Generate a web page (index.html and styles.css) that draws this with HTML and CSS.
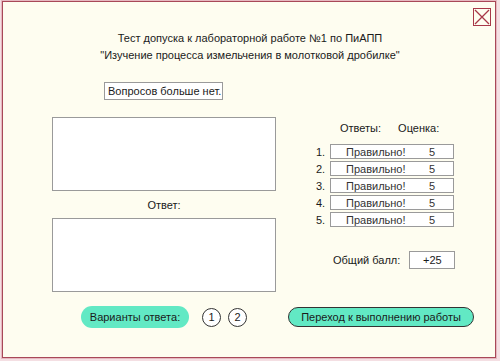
FILE: index.html
```html
<!DOCTYPE html>
<html lang="ru">
  <head>
    <meta charset="UTF-8" />
    <meta name="viewport" content="width=device-width, initial-scale=1.0" />
    <title>Тест допуска</title>
    <link rel="stylesheet" href="styles.css">
  </head>

  <body>
    <div class="frame">
      <div class="top">
        <div class="close">
          <svg width="18" height="18" viewBox="0 0 18 18">
            <rect x="0.5" y="0.5" width="17" height="17" fill="none" stroke="#a83848" />
            <path d="M2 2 L16 16 M16 2 L2 16" stroke="#a83848" stroke-width="1.3" />
          </svg>
        </div>
      </div>

      <div class="title">
        <div>Тест допуска к лабораторной работе №1 по ПиАПП</div>
        <div>"Изучение процесса измельчения в молотковой дробилке"</div>
      </div>

      <div class="main">
        <div class="left">
          <div class="notice">Вопросов больше нет.</div>
          <div class="box question"></div>
          <div class="label">Ответ:</div>
          <div class="box answer"></div>
        </div>

        <div class="right">
          <div class="heads">
            <div>Ответы:</div>
            <div>Оценка:</div>
          </div>
          <div class="rows">
            <div class="row"><span class="num">1.</span><div class="cell"><span>Правильно!</span><span>5</span></div></div>
            <div class="row"><span class="num">2.</span><div class="cell"><span>Правильно!</span><span>5</span></div></div>
            <div class="row"><span class="num">3.</span><div class="cell"><span>Правильно!</span><span>5</span></div></div>
            <div class="row"><span class="num">4.</span><div class="cell"><span>Правильно!</span><span>5</span></div></div>
            <div class="row"><span class="num">5.</span><div class="cell"><span>Правильно!</span><span>5</span></div></div>
          </div>
          <div class="total">
            <span>Общий балл:</span>
            <div class="score">+25</div>
          </div>
        </div>
      </div>

      <div class="bottom">
        <div class="pill variants">Варианты ответа:</div>
        <div class="circle">1</div>
        <div class="circle">2</div>
        <div class="pill go">Переход к выполнению работы</div>
      </div>
    </div>
  </body>
</html>
```

FILE: styles.css
```css
* {
  box-sizing: border-box;
  padding: 0;
  margin: 0;
}
body {
  background: #f4dfe3;
  width: 500px;
  height: 361px;
  font-family: "Liberation Sans", Arial, sans-serif;
  font-size: 11px;
  color: #1a1a1a;
  padding: 1px 0 0 2px;
  white-space: nowrap;
}
.frame {
  width: 494px;
  height: 357px;
  border: 1px solid #a84858;
  box-shadow: 0 0 0 1px #e6b8c0;
  background: #fefdf0;
}
.top {
  display: flex;
  justify-content: flex-end;
  padding: 6px 4px 0 0;
}
.close {
  width: 18px;
  height: 18px;
}
.close svg {
  display: block;
}
.title {
  text-align: center;
  line-height: 17px;
  margin-top: 4px;
  padding-left: 2px;
}
.main {
  display: flex;
  margin-top: 18px;
  padding-left: 49px;
}
.left {
  width: 224px;
  display: flex;
  flex-direction: column;
}
.notice {
  align-self: flex-start;
  margin-left: 52px;
  width: 119px;
  height: 18px;
  line-height: 16px;
  padding: 0 3px;
  border: 1px solid #9a9a9a;
  background: #fff;
}
.box {
  height: 74px;
  border: 1px solid #9a9a9a;
  background: #fff;
}
.question {
  margin-top: 17px;
}
.label {
  text-align: center;
  line-height: 15px;
  margin: 7px 0 5px;
}
.right {
  margin-left: 34px;
  width: 146px;
  display: flex;
  flex-direction: column;
}
.heads {
  display: flex;
  gap: 17px;
  padding-left: 30px;
  margin-top: 39px;
  line-height: 15px;
}
.rows {
  display: flex;
  flex-direction: column;
  gap: 2px;
  margin-top: 8px;
}
.row {
  display: flex;
  align-items: center;
}
.num {
  width: 20px;
  padding-left: 6px;
}
.cell {
  width: 124px;
  height: 15px;
  border: 1px solid #9a9a9a;
  background: #fff;
  display: flex;
  justify-content: space-between;
  align-items: center;
  padding: 0 18px 0 15px;
  color: #333;
}
.total {
  display: flex;
  align-items: center;
  margin-top: 24px;
  padding-left: 23px;
  gap: 9px;
}
.score {
  width: 46px;
  height: 18px;
  border: 1px solid #9a9a9a;
  background: #fff;
  text-align: center;
  line-height: 16px;
}
.bottom {
  display: flex;
  align-items: center;
  margin-top: 14px;
  padding-left: 78px;
}
.pill {
  background: #62e9c4;
  height: 22px;
  line-height: 22px;
  border-radius: 11px;
  text-align: center;
}
.variants {
  width: 108px;
}
.circle {
  width: 19px;
  height: 19px;
  border: 1.5px solid #333;
  border-radius: 50%;
  text-align: center;
  line-height: 16px;
  background: #fff;
  margin-left: 13px;
}
.circle + .circle {
  margin-left: 7px;
}
.go {
  margin-left: 41px;
  width: 186px;
  height: 20px;
  line-height: 18px;
  border: 1px solid #333;
  border-radius: 10px;
}
```
